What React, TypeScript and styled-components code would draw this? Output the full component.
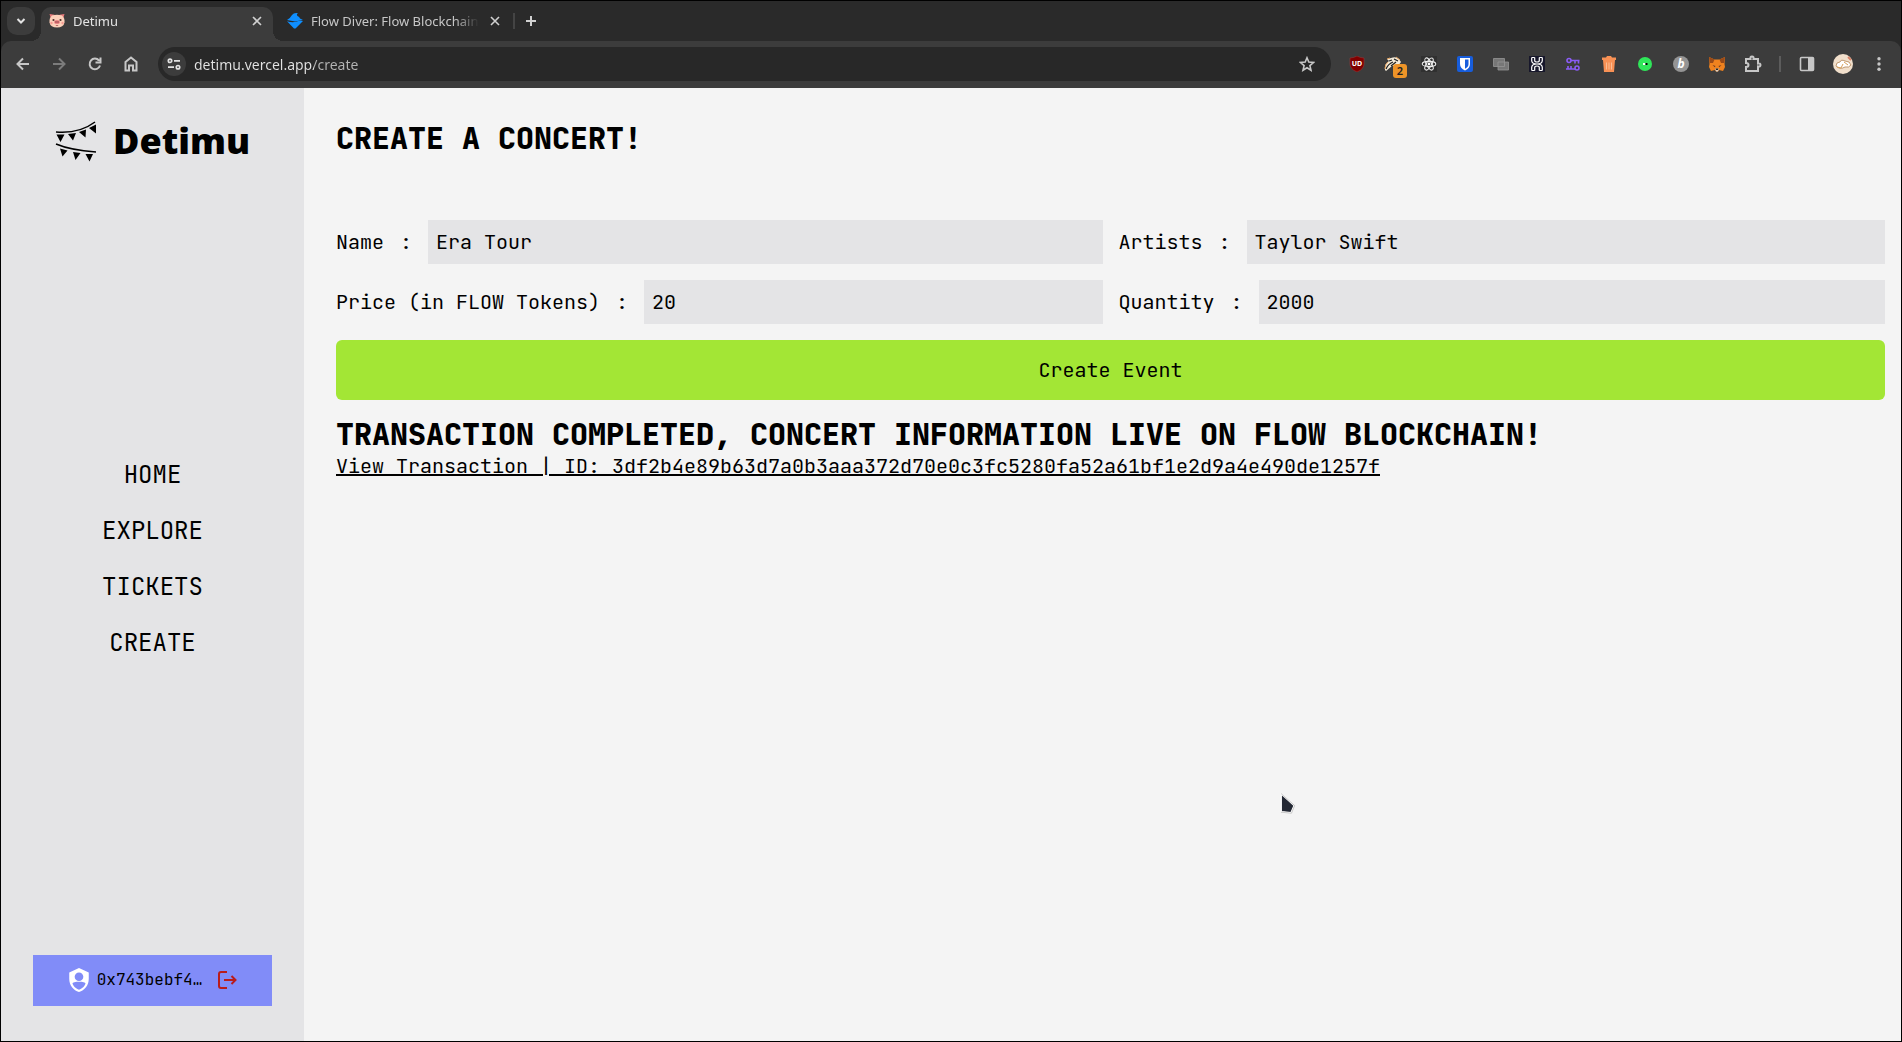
import React, { useState } from "react";
import styled, { createGlobalStyle } from "styled-components";

const mono = `"JetBrains Mono", "DejaVu Sans Mono", monospace`;
const ui = `"Noto Sans", sans-serif`;

const GlobalStyle = createGlobalStyle`
  *, *::before, *::after { box-sizing: border-box; }
  body { margin: 0; background: #000; }
  h1, h2, p { margin: 0; }
  button, input { font: inherit; color: inherit; border: 0; padding: 0; outline: none; }
  button { background: none; cursor: pointer; }
`;

const Window = styled.div`
  display: flex;
  flex-direction: column;
  min-height: 100vh;
  border: 1px solid #000;
  background: #2a2a2a;
`;

/* ---------- browser frame ---------- */

const TabStrip = styled.div`
  display: flex;
  align-items: flex-start;
  height: 40px;
  padding: 6px 6px 0;
  font-family: ${ui};
  font-size: 13px;
  color: #c7c7c7;
`;

const TabSearch = styled.button`
  display: grid;
  place-items: center;
  width: 28px;
  height: 28px;
  margin-right: 6px;
  border-radius: 10px;
  background: #3c3c3c;
  color: #e3e3e3;
`;

const Tab = styled.div<{ $active?: boolean }>`
  position: relative;
  display: flex;
  align-items: center;
  gap: 8px;
  width: ${(p) => (p.$active ? 232 : 238)}px;
  height: 34px;
  padding: ${(p) => (p.$active ? "0 8px 6px" : "0 8px 6px 14px")};
  border-radius: 10px 10px 0 0;
  background: ${(p) => (p.$active ? "#3c3c3c" : "transparent")};
  color: ${(p) => (p.$active ? "#e3e3e3" : "#c7c7c7")};

  &::before,
  &::after {
    content: "";
    display: ${(p) => (p.$active ? "block" : "none")};
    position: absolute;
    bottom: 0;
    width: 10px;
    height: 10px;
  }
  &::before {
    right: 100%;
    background: radial-gradient(circle at 0 0, transparent 10px, #3c3c3c 10px);
  }
  &::after {
    left: 100%;
    background: radial-gradient(circle at 100% 0, transparent 10px, #3c3c3c 10px);
  }
`;

const TabTitle = styled.span`
  flex: 1;
  min-width: 0;
  overflow: hidden;
  white-space: nowrap;
  line-height: 20px;
  mask-image: linear-gradient(to left, transparent 0, #000 24px);
`;

const TabButton = styled.button`
  display: grid;
  place-items: center;
  width: 16px;
  height: 28px;
  color: #d0d0d0;
`;

const TabDivider = styled.span`
  width: 2px;
  height: 16px;
  margin: 6px 8px 0 2px;
  background: #444;
`;

const Toolbar = styled.div`
  display: flex;
  align-items: center;
  height: 47px;
  padding: 0 4px 1px;
  border-radius: 10px 10px 0 0;
  background: #3c3c3c;
  font-family: ${ui};
  color: #c7c7c7;
`;

const ToolButton = styled.button<{ $dim?: boolean }>`
  position: relative;
  display: grid;
  place-items: center;
  flex: none;
  width: 36px;
  height: 34px;
  color: ${(p) => (p.$dim ? "#7c7c7c" : "#c7c7c7")};
`;

const Omnibox = styled.div`
  display: flex;
  align-items: center;
  flex: 1;
  min-width: 0;
  height: 34px;
  margin: 0 8px 0 9px;
  padding: 0 6px 0 4px;
  border-radius: 17px;
  background: #282828;
`;

const SiteInfo = styled.button`
  display: grid;
  place-items: center;
  flex: none;
  width: 24px;
  height: 24px;
  margin-right: 8px;
  border-radius: 12px;
  background: #3c3c3c;
  color: #e3e3e3;
`;

const Address = styled.input`
  flex: 1;
  min-width: 0;
  height: 24px;
  background: linear-gradient(90deg, #e3e3e3 120px, #b4b4b4 120px);
  background-clip: text;
  -webkit-background-clip: text;
  color: transparent;
  font-size: 14px;
`;

const Badge = styled.span`
  position: absolute;
  right: 4px;
  bottom: 3px;
  width: 14px;
  height: 14px;
  border-radius: 3px;
  background: #ee9428;
  color: #222;
  font-size: 11px;
  font-weight: 600;
  line-height: 14px;
`;

const Disc = styled.span<{ $bg: string; $size: number }>`
  display: grid;
  place-items: center;
  width: ${(p) => p.$size}px;
  height: ${(p) => p.$size}px;
  border-radius: 50%;
  background: ${(p) => p.$bg};
  color: #fff;
  font-size: 12px;
  font-style: italic;
  font-weight: 700;
  line-height: 16px;
`;

const ToolDivider = styled.span`
  flex: none;
  width: 2px;
  height: 16px;
  margin: 0 8px;
  background: #5c5c5c;
`;

/* ---------- page ---------- */

const Page = styled.div`
  display: flex;
  flex: 1;
  background: #f4f4f4;
  color: #000;
  font-family: ${mono};
  font-size: 20px;
  line-height: 28px;
`;

const Sidebar = styled.aside`
  display: flex;
  flex-direction: column;
  justify-content: space-between;
  flex: none;
  width: 303px;
  padding: 32px 32px 35px;
  background: #e4e4e6;
`;

const Brand = styled.a`
  display: flex;
  align-items: center;
  justify-content: center;
  gap: 16px;
  height: 42px;
  color: #000;
  font-family: "Noto Sans", sans-serif;
  font-size: 36px;
  font-weight: 900;
  line-height: 42px;
  text-decoration: none;
`;

const Nav = styled.nav`
  display: flex;
  flex-direction: column;
  align-items: center;
  gap: 24px;
`;

const NavLink = styled.a`
  color: #000;
  font-size: 24px;
  line-height: 32px;
  text-decoration: none;
`;

const Wallet = styled.button`
  display: flex;
  align-items: center;
  justify-content: center;
  height: 51px;
  padding-bottom: 1px;
  background: #818cf8;
  font-size: 16px;
  line-height: 24px;
`;

const WalletAddress = styled.span`
  margin: 0 13px 0 5px;
`;

const Main = styled.main`
  flex: 1;
  min-width: 0;
  padding: 32px 16px 32px 32px;
`;

const Title = styled.h1`
  font-size: 30px;
  font-weight: 800;
  line-height: 36px;
`;

const Form = styled.form`
  display: grid;
  grid-template-columns: 1fr 1fr;
  gap: 16px;
  margin: 64px 0 16px;
`;

const Field = styled.label`
  display: flex;
  align-items: center;
  gap: 16px;
  min-width: 0;
  white-space: nowrap;
`;

const FieldInput = styled.input`
  flex: 1;
  min-width: 0;
  height: 44px;
  padding: 8px;
  background: #e4e4e6;
`;

const Submit = styled.button`
  grid-column: 1 / -1;
  padding: 16px;
  border-radius: 6px;
  background: #a3e635;
`;

const TransactionLink = styled.a`
  color: #000;
  text-decoration: underline;
  overflow-wrap: anywhere;
`;

const Pointer = styled.svg`
  position: absolute;
  left: 1280px;
  top: 793px;
  pointer-events: none;
`;

/* ---------- drawings ---------- */

const stroke = { fill: "none", stroke: "currentColor", strokeWidth: 2 } as const;

const Pig = () => (
  <svg width="16" height="16" viewBox="0 0 16 16">
    <path d="M.5 1l5 .8-3.500 4.500zM15.500 1l-5 .8 3.500 4.500z" fill="#e8797b" />
    <path d="M3 2.500Q8 .8 13 2.500 16 5 15.500 9.500 14.500 14.500 8 14.500T.5 9.500Q0 5 3 2.500z" fill="#fdd0ba" />
    <circle cx="4.500" cy="7" r="1.100" fill="#4b2f2b" />
    <circle cx="11.500" cy="7" r="1.100" fill="#4b2f2b" />
    <ellipse cx="8" cy="9" rx="2.900" ry="2" fill="#ee8586" />
    <circle cx="7" cy="9" r=".7" fill="#6d2c33" />
    <circle cx="9" cy="9" r=".7" fill="#6d2c33" />
    <path d="M6.500 12Q8 13.500 9.500 12z" fill="#8a2531" />
    <circle cx="2.500" cy="10" r="1.200" fill="#f59a92" />
    <circle cx="13.500" cy="10" r="1.200" fill="#f59a92" />
  </svg>
);

const Diver = () => (
  <svg width="16" height="16" viewBox="0 0 16 16">
    <path d="M0 7Q3 5.500 5 2 7-.5 11 .3 9 1.500 10.500 3 12.500 3.500 13 5.500L16 7 8 8.500z" fill="#0f8fff" />
    <path d="M0 8.200Q5 10 9 8.800 12 7.500 16 8L8.500 15.600H7z" fill="#0f8fff" />
  </svg>
);

const Cross = () => (
  <svg width="10" height="10" viewBox="0 0 10 10" {...stroke} strokeWidth="1.600">
    <path d="M1 1l8 8M9 1L1 9" />
  </svg>
);

const Flags = () => (
  <svg width="42" height="42" viewBox="0 0 42 42" aria-hidden="true">
    <g fill="none" stroke="#000" strokeWidth="1.500">
      <path d="M1 12Q24 14 40 2M1 24Q15 30 41 32" />
    </g>
    <path d="M1.500 14.500l8 0-4 7.500zM13 14l8-1-3 7.500zM24 12l7-2.500-.5 8zM34 8l7-3.500v9zM5 28.500l7.500 2-5 6zM18 32l7.500 1-5 7zM30.500 34h7.500l-3.500 7.500z" />
  </svg>
);

const ShieldAccount = () => (
  <svg width="26" height="26" viewBox="0 0 24 24" fill="#fff" aria-hidden="true">
    <path
      fillRule="evenodd"
      d="M12 1L3 5v6c0 5.550 3.840 10.740 9 12 5.160-1.260 9-6.450 9-12V5zM12 5a4 4 0 110 8 4 4 0 010-8zM17.130 17c-1.210 1.850-3 3.240-5.130 3.920C9.870 20.240 8.080 18.850 6.870 17c-.34-.5-.63-1-.87-1.530C6 13.820 8.710 13.500 12 13.500s6 .29 6 1.970c-.24.53-.53 1.030-.87 1.530z"
    />
  </svg>
);

const LogOut = () => (
  <svg width="24" height="24" viewBox="0 0 24 24" fill="none" stroke="#b91c1c" strokeWidth="2" aria-hidden="true">
    <path d="M12 4H6Q4 4 4 6v12q0 2 2 2h6M9 12h11M16.500 8l4 4-4 4" />
  </svg>
);

const Badger = () => (
  <svg width="18" height="16" viewBox="0 0 18 16">
    <path d="M1 14Q0 8 5 5L3 3l4-1Q12 0 15 3l2 3-3 4H8l-6 5z" fill="#f3ead8" />
    <path d="M2 13Q4 8 9 6M5 5l3-1M10 3l4 2M7 10l5-4" fill="none" stroke="#222" strokeWidth="1.300" />
    <path d="M3 3l3-1M12 1l4 3M1 13q0-5 3-7" fill="none" stroke="#e7a35d" />
  </svg>
);

const ReactAtom = () => (
  <svg width="16" height="16" viewBox="0 0 16 16">
    <path d="M0 0h16v16H0z" fill="#303030" />
    <g fill="none" stroke="#eee" strokeWidth="1.100">
      <ellipse cx="8" cy="8" rx="6.800" ry="2.600" />
      <ellipse cx="8" cy="8" rx="6.800" ry="2.600" transform="rotate(60 8 8)" />
      <ellipse cx="8" cy="8" rx="6.800" ry="2.600" transform="rotate(120 8 8)" />
    </g>
    <circle cx="8" cy="8" r="1.400" fill="#fff" />
  </svg>
);

const UShield = () => (
  <svg width="16" height="16" viewBox="0 0 16 16">
    <path d="M8 0Q11 1.800 15 2v6q0 5-7 8-7-3-7-8V2Q5 1.800 8 0z" fill="#800000" stroke="#a03a3a" strokeWidth=".5" />
    <text x="8" y="10" fill="#fff" fontSize="7" fontWeight="700" textAnchor="middle" fontFamily="Noto Sans, sans-serif">
      UD
    </text>
  </svg>
);

const Bitwarden = () => (
  <svg width="16" height="16" viewBox="0 0 16 16">
    <rect width="16" height="16" rx="2" fill="#175ddc" />
    <path d="M3 2h10v6q0 4-5 6.500Q3 12 3 8z" fill="#fff" />
    <path d="M8 3.500h3.500V8q0 3-3.500 4.800z" fill="#175ddc" />
  </svg>
);

const Stack = () => (
  <svg width="16" height="16" viewBox="0 0 16 16" fill="#777" stroke="#969696" strokeWidth=".8">
    <path d="M.5 2.500h11v8H.5zM5 6h10.500v8H5z" />
  </svg>
);

const Knot = () => (
  <svg width="16" height="16" viewBox="0 0 16 16">
    <path d="M0 0h16v16H0z" fill="#17172b" />
    <path
      d="M2.700 1.500v3Q2.700 8 8 8t5.300-3.500v-3M5.700 1.500v3q0 1.500 2.300 1.500t2.300-1.500v-3M2.700 14.500v-3Q2.700 8 8 8t5.300 3.500v3M5.700 14.500v-3q0-1.500 2.300-1.500t2.300 1.500v3M2.700 1.500h3M10.300 1.500h3M2.700 14.500h3M10.300 14.500h3"
      fill="none"
      stroke="#fff"
      strokeWidth="1.200"
    />
  </svg>
);

const Keys = () => (
  <svg width="14" height="14" viewBox="0 0 14 14" fill="none" stroke="#8b5cf6" strokeWidth="1.600">
    <circle cx="3" cy="3.500" r="2" />
    <path d="M5 3.500h8.500M9 3.500v3M12.500 3.500v3M0 12h9M2 12V9M5 12V9" />
    <circle cx="11" cy="11" r="2" />
  </svg>
);

const Trash = () => (
  <svg width="14" height="16" viewBox="0 0 14 16">
    <path d="M0 1.500h4L5 0h4l1 1.500h4v2.500H0zM1 4h12L12 16H2z" fill="#f89155" />
    <path d="M4.500 6.500v7M7 6.500v7M9.500 6.500v7" stroke="#fbbd94" />
  </svg>
);

const Fox = () => (
  <svg width="16" height="16" viewBox="0 0 16 16">
    <path d="M0 1l5.500 2.500h5L16 1l-.5 7L16 11l-2 4-4-1-1 1.500H7L6 14l-4 1-2-4 .5-3z" fill="#f0821e" />
    <path d="M0 1l5.500 2.500L4 7 .8 7zM16 1l-5.500 2.500L12 7l3.200 0z" fill="#9a4a18" />
    <path d="M3.500 9l3 1-.8 1.200zM12.500 9l-3 1 .8 1.200z" fill="#6b3a22" />
    <path d="M6 12.500h4L9 15.500H7z" fill="#d9cfc6" />
    <path d="M6.500 12.500h3l-.5 1.500H7z" fill="#2b2522" />
  </svg>
);

const Puzzle = () => (
  <svg width="18" height="18" viewBox="0 0 18 18" {...stroke}>
    <path d="M2 4h4.500Q6 1.500 8 1.500T9.500 4H14v4.500q2.500-.5 2.500 1.500T14 11.500V16H2v-4q2.500 0 2.500-2T2 8z" />
  </svg>
);

const Avatar = () => (
  <svg width="20" height="20" viewBox="0 0 20 20">
    <circle cx="10" cy="10" r="10" fill="#f1dfcb" />
    <path d="M3 12q0-4 4-4 1-3 5-1 5 0 6 4-2 3-6 2-5 3-9-1z" fill="#fff" stroke="#b08252" strokeWidth=".8" />
    <path d="M4 13l4 1 2-4M11 8l4 3" fill="none" stroke="#d9a05a" />
    <path d="M15 3l3 3" stroke="#d98368" strokeWidth="2" />
  </svg>
);

type FieldKey = "name" | "artists" | "price" | "quantity";

const fields: { key: FieldKey; label: string }[] = [
  { key: "name", label: "Name" },
  { key: "artists", label: "Artists" },
  { key: "price", label: "Price (in FLOW Tokens)" },
  { key: "quantity", label: "Quantity" },
];

const extensions: { name: string; icon: React.ReactNode }[] = [
  { name: "Ad blocker", icon: <UShield /> },
  { name: "Tracker blocker", icon: <><Badger /><Badge>2</Badge></> },
  { name: "React tools", icon: <ReactAtom /> },
  { name: "Password manager", icon: <Bitwarden /> },
  { name: "Windows", icon: <Stack /> },
  { name: "Wallet", icon: <Knot /> },
  { name: "Keys", icon: <Keys /> },
  { name: "Cleaner", icon: <Trash /> },
  {
    name: "Recorder",
    icon: (
      <svg width="14" height="14" viewBox="0 0 14 14">
        <circle cx="7" cy="7" r="7" fill="#2fe659" />
        <path d="M5 6h2.500v2H5z" fill="#fff" />
        <path d="M7.500 6h2v2h-2z" fill="#000" />
      </svg>
    ),
  },
  { name: "Bold", icon: <Disc $bg="#959595" $size={16}>b</Disc> },
  { name: "Fox wallet", icon: <Fox /> },
  { name: "Extensions", icon: <Puzzle /> },
];

const BrowserFrame = () => (
  <header>
    <TabStrip>
      <TabSearch aria-label="Search tabs">
        <svg width="10" height="8" viewBox="0 0 10 8" {...stroke}>
          <path d="M1.500 2L5 5.500 8.500 2" />
        </svg>
      </TabSearch>
      <Tab $active>
        <Pig />
        <TabTitle>Detimu</TabTitle>
        <TabButton aria-label="Close Detimu"><Cross /></TabButton>
      </Tab>
      <Tab>
        <Diver />
        <TabTitle>Flow Diver: Flow Blockchain</TabTitle>
        <TabButton aria-label="Close Flow Diver"><Cross /></TabButton>
      </Tab>
      <TabDivider />
      <TabButton aria-label="New tab">
        <svg width="12" height="12" viewBox="0 0 12 12" {...stroke}>
          <path d="M6 1v10M1 6h10" />
        </svg>
      </TabButton>
    </TabStrip>
    <Toolbar>
      <ToolButton aria-label="Back">
        <svg width="14" height="14" viewBox="0 0 14 14" {...stroke}>
          <path d="M13 7H2M7 1.500L1.500 7 7 12.500" />
        </svg>
      </ToolButton>
      <ToolButton aria-label="Forward" $dim>
        <svg width="14" height="14" viewBox="0 0 14 14" {...stroke}>
          <path d="M1 7h11M7 1.500L12.500 7 7 12.500" />
        </svg>
      </ToolButton>
      <ToolButton aria-label="Reload">
        <svg width="14" height="14" viewBox="0 0 14 14" {...stroke}>
          <path d="M12 8.500A5.300 5.300 0 1111 3.500M12.500 .5v5h-5" />
        </svg>
      </ToolButton>
      <ToolButton aria-label="Home">
        <svg width="14" height="16" viewBox="0 0 14 16" {...stroke}>
          <path d="M1.500 6L7 1.500 12.500 6v8.500H9V9.500H5v5H1.500z" />
        </svg>
      </ToolButton>
      <Omnibox>
        <SiteInfo aria-label="Site information">
          <svg width="14" height="12" viewBox="0 0 14 12" {...stroke} strokeWidth="1.700">
            <circle cx="3" cy="2.800" r="1.700" />
            <path d="M7 2.800h6M1 9.200h6" />
            <circle cx="11" cy="9.200" r="1.700" />
          </svg>
        </SiteInfo>
        <Address aria-label="Address" defaultValue="detimu.vercel.app/create" />
        <ToolButton aria-label="Bookmark">
          <svg width="16" height="16" viewBox="0 0 16 16" {...stroke} strokeWidth="1.600">
            <path d="M8 1.800l1.800 4.300 4.700.4-3.600 3.100 1.100 4.600L8 11.700l-4 2.500 1.100-4.600L1.500 6.500l4.700-.4z" />
          </svg>
        </ToolButton>
      </Omnibox>
      {extensions.map((e) => (
        <ToolButton key={e.name} aria-label={e.name}>
          {e.icon}
        </ToolButton>
      ))}
      <ToolDivider />
      <ToolButton aria-label="Side panel">
        <svg width="16" height="16" viewBox="0 0 16 16">
          <rect x="1.500" y="1.500" width="13" height="13" rx="1" {...stroke} strokeWidth="1.600" />
          <path d="M9 1.500h5.500v13H9z" fill="currentColor" />
        </svg>
      </ToolButton>
      <ToolButton aria-label="Profile"><Avatar /></ToolButton>
      <ToolButton aria-label="Menu">
        <svg width="4" height="14" viewBox="0 0 4 14" fill="currentColor">
          <circle cx="2" cy="1.800" r="1.700" />
          <circle cx="2" cy="7" r="1.700" />
          <circle cx="2" cy="12.200" r="1.700" />
        </svg>
      </ToolButton>
    </Toolbar>
  </header>
);

export default function App() {
  const [values, setValues] = useState<Record<FieldKey, string>>({
    name: "Era Tour",
    artists: "Taylor Swift",
    price: "20",
    quantity: "2000",
  });

  return (
    <Window>
      <GlobalStyle />
      <BrowserFrame />
      <Page>
        <Sidebar>
          <Brand href="#home">
            <Flags />
            Detimu
          </Brand>
          <Nav>
            {["HOME", "EXPLORE", "TICKETS", "CREATE"].map((item) => (
              <NavLink key={item} href={`#${item.toLowerCase()}`}>
                {item}
              </NavLink>
            ))}
          </Nav>
          <Wallet>
            <ShieldAccount />
            <WalletAddress>0x743bebf4…</WalletAddress>
            <LogOut />
          </Wallet>
        </Sidebar>
        <Main>
          <Title>CREATE A CONCERT!</Title>
          <Form onSubmit={(e) => e.preventDefault()}>
            {fields.map(({ key, label }) => (
              <Field key={key}>
                <span>{label}</span>
                <span>:</span>
                <FieldInput
                  name={key}
                  value={values[key]}
                  onChange={(e) => setValues({ ...values, [key]: e.target.value })}
                />
              </Field>
            ))}
            <Submit type="submit">Create Event</Submit>
          </Form>
          <Title as="h2">TRANSACTION COMPLETED, CONCERT INFORMATION LIVE ON FLOW BLOCKCHAIN!</Title>
          <TransactionLink href="#transaction">
            View Transaction | ID: 3df2b4e89b63d7a0b3aaa372d70e0c3fc5280fa52a61bf1e2d9a4e490de1257f
          </TransactionLink>
        </Main>
      </Page>
      <Pointer width="18" height="22" viewBox="0 0 18 22" aria-hidden="true">
        <path d="M1.300 1L14 12.500 11 19.500 1.300 18.500z" fill="#242834" stroke="#fff" strokeWidth="1.200" />
        <path d="M1 .5L14.600 12.500 11.500 20.200 1 19.200" fill="none" stroke="#999" strokeWidth=".5" />
      </Pointer>
    </Window>
  );
}
